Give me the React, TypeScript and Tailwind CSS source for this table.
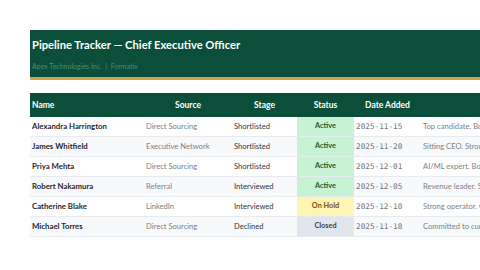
import React from 'react';

type Status = 'Active' | 'On Hold' | 'Closed';

interface Candidate {
  name: string;
  source: string;
  stage: string;
  status: Status;
  date: string;
  notes: string;
}

const candidates: Candidate[] = [
  { name: 'Alexandra Harrington', source: 'Direct Sourcing', stage: 'Shortlisted', status: 'Active', date: '2025-11-15', notes: 'Top candidate. Board-ready, strong references.' },
  { name: 'James Whitfield', source: 'Executive Network', stage: 'Shortlisted', status: 'Active', date: '2025-11-20', notes: 'Sitting CEO. Strong turnaround record.' },
  { name: 'Priya Mehta', source: 'Direct Sourcing', stage: 'Shortlisted', status: 'Active', date: '2025-12-01', notes: 'AI/ML expert. Board experience.' },
  { name: 'Robert Nakamura', source: 'Referral', stage: 'Interviewed', status: 'Active', date: '2025-12-05', notes: 'Revenue leader. Scaled two SaaS firms.' },
  { name: 'Catherine Blake', source: 'LinkedIn', stage: 'Interviewed', status: 'On Hold', date: '2025-12-10', notes: 'Strong operator. Compensation gap.' },
  { name: 'Michael Torres', source: 'Direct Sourcing', stage: 'Declined', status: 'Closed', date: '2025-11-18', notes: 'Committed to current role.' },
];

const statusStyles: Record<Status, string> = {
  Active: 'bg-[#c8f2d4] text-[#1d5a34]',
  'On Hold': 'bg-[#fdf5b4] text-[#7a4d10]',
  Closed: 'bg-[#e1e5ec] text-[#3a4352]',
};

const cols = 'grid grid-cols-[114px_88px_65px_57px_67px_260px]';

const App: React.FC = () => {
  return (
    <div className="w-[480px] h-[270px] overflow-hidden bg-white font-['Lato','Open_Sans',sans-serif]">
      <div className="pl-[30px] pt-[30px] w-[640px]">
        {/* Title banner */}
        <div className="bg-[#0b4f3a] border-b-[3px] border-[#c9a84c] h-[50px] px-[2px] pt-[7px]">
          <h1 className="text-[11.2px] font-bold text-white leading-[16px]">
            Pipeline Tracker — Chief Executive Officer
          </h1>
          <p className="mt-[9px] text-[7px] leading-[9px] text-[#4d8a70]">
            Apex Technologies Inc. &nbsp;|&nbsp; Formatix
          </p>
        </div>

        {/* Table */}
        <div className="mt-[13px]">
          <div className={`${cols} bg-[#0b4f3a] h-[24px] items-center text-white font-bold text-[8.5px]`}>
            <div className="px-[2px]">Name</div>
            <div className="text-center">Source</div>
            <div className="text-center">Stage</div>
            <div className="text-center">Status</div>
            <div className="text-center">Date Added</div>
            <div className="text-center">Notes</div>
          </div>
          {candidates.map((c, i) => (
            <div
              key={c.name}
              className={`${cols} h-[20px] items-stretch border-b border-[#e7eaee] text-[7.6px] ${
                i % 2 === 1 ? 'bg-[#f7f9fb]' : 'bg-white'
              }`}
            >
              <div className="flex items-center px-[2px] font-bold text-[7.8px] text-[#1f2530]">{c.name}</div>
              <div className="flex items-center px-[2px] text-[#7b818a]">{c.source}</div>
              <div className="flex items-center px-[2px] text-[#2f353e]">{c.stage}</div>
              <div className={`flex items-center justify-center font-bold text-[7.3px] ${statusStyles[c.status]}`}>
                {c.status}
              </div>
              <div className="flex items-center px-[2px] text-[#6f757e] font-['DejaVu_Sans_Mono',monospace] text-[7.7px]">
                {c.date}
              </div>
              <div className="flex items-center px-[2px] text-[#7b818a] whitespace-nowrap">{c.notes}</div>
            </div>
          ))}
        </div>
      </div>
    </div>
  );
};

export default App;
